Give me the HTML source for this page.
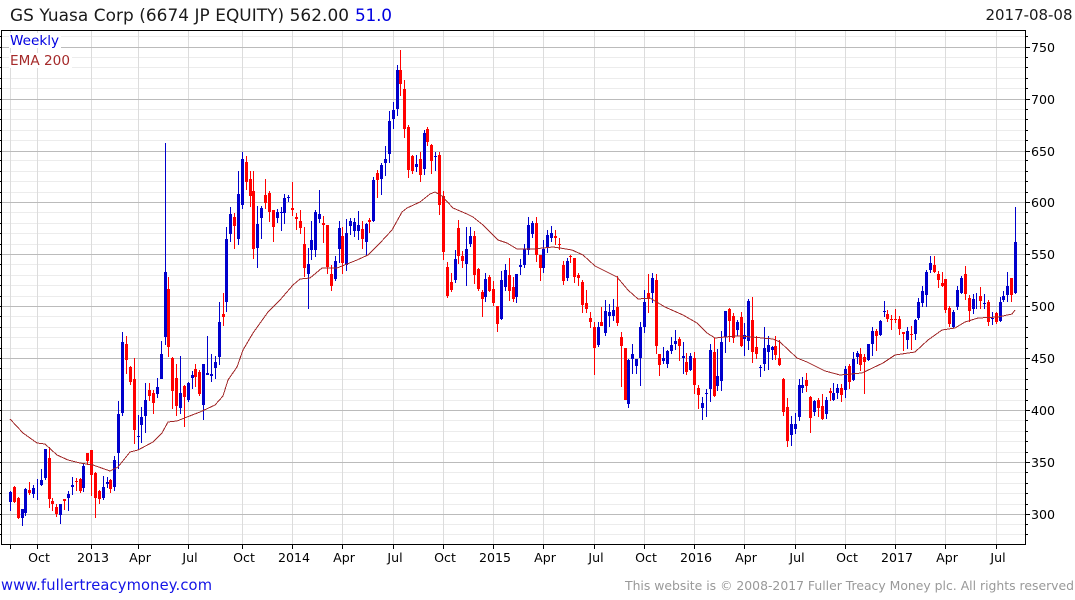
<!DOCTYPE html>
<html>
<head>
<meta charset="utf-8">
<title>GS Yuasa Corp</title>
<style>
html,body{margin:0;padding:0;background:#fff;width:1075px;height:600px;overflow:hidden}
svg{display:block}
text{font-family:"DejaVu Sans","Liberation Sans",sans-serif}
</style>
</head>
<body>
<svg width="1075" height="600" viewBox="0 0 1075 600" xmlns="http://www.w3.org/2000/svg">
<rect width="1075" height="600" fill="#fff"/>
<g shape-rendering="crispEdges" fill="none">
<path stroke="#ececec" d="M2 534.5H1025M2 524.5H1025M2 504.5H1025M2 493.5H1025M2 483.5H1025M2 472.5H1025M2 452.5H1025M2 441.5H1025M2 431.5H1025M2 420.5H1025M2 400.5H1025M2 389.5H1025M2 379.5H1025M2 368.5H1025M2 348.5H1025M2 337.5H1025M2 327.5H1025M2 316.5H1025M2 296.5H1025M2 285.5H1025M2 275.5H1025M2 264.5H1025M2 244.5H1025M2 233.5H1025M2 223.5H1025M2 212.5H1025M2 192.5H1025M2 181.5H1025M2 171.5H1025M2 160.5H1025M2 140.5H1025M2 130.5H1025M2 119.5H1025M2 109.5H1025M2 88.5H1025M2 78.5H1025M2 67.5H1025M2 57.5H1025M2 36.5H1025"/>
<path stroke="#dcdcdc" d="M10.5 30V544M37.5 30V544M91.5 30V544M138.5 30V544M188.5 30V544M242.5 30V544M292.5 30V544M342.5 30V544M393.5 30V544M443.5 30V544M493.5 30V544M543.5 30V544M594.5 30V544M644.5 30V544M694.5 30V544M744.5 30V544M795.5 30V544M845.5 30V544M895.5 30V544M945.5 30V544M996.5 30V544"/>
<path stroke="#bbb" d="M2 514.5H1025M2 462.5H1025M2 410.5H1025M2 358.5H1025M2 306.5H1025M2 254.5H1025M2 202.5H1025M2 151.5H1025M2 99.5H1025M2 47.5H1025"/>
<!-- blue wicks -->
<path stroke="#0000cc" d="M10.5 491V511M22.5 509V526M25.5 488V516M33.5 485V498M37.5 479V500M41.5 469V486M45.5 449V480M60.5 504V524M68.5 491V511M72.5 477V495M83.5 463V492M103.5 476V500M107.5 477V488M114.5 456V491M118.5 401V469M122.5 332V416M138.5 415V450M141.5 407V443M145.5 383V433M157.5 378V398M161.5 341V379M165.5 143V345M180.5 356V414M188.5 382V402M192.5 371V389M203.5 364V420M207.5 336V375M211.5 354V382M215.5 356V379M219.5 302V365M226.5 227V312M230.5 207V242M238.5 171V245M242.5 152V209M257.5 206V268M261.5 206V239M277.5 209V223M281.5 207V231M284.5 194V224M288.5 195V202M308.5 248V309M311.5 221V260M315.5 210V257M319.5 190V223M335.5 256V281M339.5 221V263M346.5 219V271M350.5 218V235M354.5 218V237M358.5 211V240M366.5 223V256M373.5 177V222M381.5 163V195M385.5 146V176M389.5 111V163M393.5 102V129M397.5 65V116M416.5 155V172M424.5 130V175M435.5 152V171M455.5 250V283M466.5 227V286M470.5 227V247M485.5 273V302M501.5 271V320M505.5 264V291M516.5 274V303M520.5 259V275M524.5 244V268M528.5 217V255M532.5 221V238M543.5 240V273M547.5 230V253M551.5 226V242M567.5 258V281M598.5 322V347M605.5 300V336M609.5 304V327M613.5 299V321M628.5 359V408M632.5 344V374M636.5 359V374M640.5 322V386M644.5 290V333M652.5 273V303M663.5 347V364M667.5 350V368M671.5 337V354M675.5 330V350M683.5 342V374M690.5 353V371M702.5 397V420M706.5 389V417M710.5 344V402M717.5 349V391M721.5 331V391M725.5 311V353M737.5 320V336M744.5 323V356M748.5 299V350M760.5 365V377M764.5 327V371M768.5 336V370M772.5 346V360M791.5 416V446M795.5 413V434M799.5 379V421M802.5 377V393M814.5 400V416M826.5 397V419M833.5 383V401M837.5 384V399M845.5 366V398M853.5 352V381M857.5 351V364M868.5 344V361M872.5 327V356M880.5 320V336M884.5 301V317M907.5 327V349M915.5 319V340M918.5 298V320M922.5 286V307M926.5 270V307M930.5 256V273M953.5 310V328M957.5 286V310M961.5 276V294M973.5 294V314M976.5 293V309M984.5 294V309M992.5 312V325M1000.5 297V322M1003.5 291V302M1007.5 272V302M1015.5 207V294"/>
<!-- red wicks -->
<path stroke="#ff0000" d="M14.5 486V503M18.5 497V519M29.5 482V495M49.5 447V508M52.5 498V511M56.5 504V517M64.5 499V510M76.5 478V491M80.5 478V493M87.5 453V465M91.5 450V496M95.5 472V518M99.5 490V504M110.5 479V493M126.5 336V374M130.5 366V385M134.5 358V444M149.5 383V401M153.5 390V414M168.5 277V357M172.5 357V409M176.5 364V416M184.5 385V427M195.5 364V387M199.5 370V396M223.5 293V326M234.5 213V249M246.5 156V190M250.5 171V207M253.5 171V259M265.5 179V209M269.5 191V222M273.5 210V242M292.5 182V216M296.5 213V230M300.5 210V234M304.5 227V277M323.5 216V243M327.5 225V274M331.5 265V291M342.5 227V274M362.5 221V249M369.5 218V233M377.5 170V198M400.5 50V96M404.5 80V138M408.5 125V178M412.5 155V174M420.5 152V182M427.5 127V146M431.5 144V174M439.5 152V215M443.5 191V260M447.5 262V298M451.5 273V292M458.5 220V264M462.5 251V268M474.5 231V284M478.5 268V291M482.5 290V317M489.5 275V292M493.5 281V306M497.5 306V332M509.5 258V301M513.5 277V302M536.5 217V262M540.5 255V281M555.5 230V245M559.5 238V250M563.5 261V285M570.5 255V263M574.5 258V283M578.5 273V286M582.5 280V313M586.5 290V313M590.5 312V328M594.5 322V375M601.5 307V326M617.5 276V326M621.5 332V387M625.5 348V400M648.5 274V313M656.5 274V354M659.5 354V376M679.5 337V361M686.5 353V375M694.5 352V394M698.5 385V409M714.5 338V397M729.5 308V342M733.5 313V343M741.5 312V347M752.5 297V363M756.5 336V359M775.5 336V360M779.5 340V366M783.5 378V416M787.5 398V447M806.5 373V392M810.5 396V433M818.5 398V417M822.5 394V420M830.5 388V401M841.5 384V402M849.5 364V389M860.5 348V371M864.5 354V394M876.5 329V351M887.5 310V322M891.5 315V330M895.5 309V323M899.5 316V335M903.5 332V351M911.5 326V350M934.5 256V273M938.5 271V288M942.5 272V287M945.5 279V313M949.5 306V327M965.5 266V300M969.5 295V322M980.5 287V309M988.5 300V326M996.5 312V324M1011.5 278V302"/>
<!-- blue bodies -->
<path stroke="#0000cc" stroke-width="3" d="M10.5 492V502M22.5 509V518M25.5 489V513M33.5 488V494M41.5 480V485M45.5 449V478M60.5 504V515M68.5 494V498M72.5 485V487M83.5 466V488M103.5 487V498M107.5 482V484M114.5 460V487M118.5 414V453M122.5 342V413M138.5 436V437M141.5 417V425M145.5 400V416M157.5 387V394M161.5 354V379M165.5 272V337M180.5 393V408M188.5 383V400M192.5 375V378M203.5 364V405M207.5 373V375M211.5 374V376M215.5 362V368M219.5 322V357M226.5 239V302M230.5 214V234M238.5 194V239M242.5 159V205M257.5 224V248M261.5 208V218M277.5 212V218M281.5 212V213M284.5 198V213M288.5 197V198M308.5 264V274M311.5 240V250M315.5 212V250M319.5 214V219M335.5 261V279M339.5 228V249M346.5 233V265M350.5 221V226M354.5 222V231M358.5 225V231M366.5 224V242M373.5 180V221M381.5 165V179M385.5 159V163M389.5 121V154M393.5 110V119M397.5 70V109M416.5 164V167M424.5 133V169M435.5 156V157M455.5 259V280M466.5 249V264M470.5 236V244M485.5 279V297M501.5 280V319M505.5 270V287M516.5 274V297M520.5 265V267M524.5 249V265M528.5 225V250M532.5 223V234M543.5 249V268M547.5 235V248M551.5 233V238M567.5 261V278M598.5 327V345M605.5 311V333M609.5 312V316M613.5 310V316M628.5 360V404M632.5 354V359M636.5 359V366M640.5 327V358M644.5 302V327M652.5 278V293M663.5 358V361M667.5 351V364M671.5 345V351M675.5 341V344M683.5 356V358M690.5 356V370M702.5 403V408M706.5 393V394M710.5 350V389M717.5 376V386M721.5 342V381M725.5 311V337M737.5 322V330M744.5 335V339M748.5 301V341M760.5 367V368M764.5 348V364M768.5 345V352M772.5 347V350M791.5 424V435M795.5 424V429M799.5 385V417M802.5 385V388M814.5 401V412M826.5 400V414M833.5 393V400M837.5 388V393M845.5 369V390M853.5 359V380M857.5 353V357M868.5 344V360M872.5 331V344M880.5 321V335M884.5 311V312M907.5 331V340M915.5 320V334M918.5 302V318M922.5 291V303M926.5 272V295M930.5 263V270M953.5 312V327M957.5 290V307M961.5 278V293M973.5 299V309M984.5 303V304M992.5 318V319M1000.5 302V321M1003.5 296V300M1007.5 286V295M1015.5 242V293"/>
<!-- red bodies -->
<path stroke="#ff0000" stroke-width="3" d="M14.5 487V502M18.5 498V518M29.5 490V493M49.5 458V499M52.5 501V504M56.5 507V514M64.5 499V501M76.5 481V482M80.5 479V491M87.5 453V461M91.5 450V475M95.5 473V498M99.5 491V499M110.5 480V489M126.5 344V360M130.5 367V382M134.5 379V430M149.5 390V396M153.5 393V403M168.5 289V347M172.5 358V391M176.5 378V406M184.5 386V397M195.5 369V377M199.5 372V394M223.5 314V317M234.5 217V226M246.5 162V182M250.5 179V196M253.5 191V249M265.5 195V203M269.5 193V212M273.5 210V227M292.5 208V210M296.5 217V219M300.5 221V228M304.5 244V268M323.5 223V225M327.5 225V267M331.5 274V286M342.5 236V263M362.5 229V239M369.5 220V222M377.5 173V180M400.5 70V84M404.5 89V129M408.5 127V170M412.5 156V171M420.5 159V175M427.5 129V142M431.5 145V161M439.5 155V205M443.5 196V252M447.5 267V296M451.5 282V290M458.5 228V256M462.5 256V261M474.5 236V275M478.5 269V289M482.5 292V299M489.5 277V291M493.5 289V303M497.5 306V324M509.5 275V291M513.5 287V299M536.5 223V255M540.5 255V268M555.5 236V238M559.5 244V245M563.5 265V281M570.5 256V257M574.5 258V277M578.5 275V278M582.5 282V305M586.5 303V309M590.5 318V322M594.5 327V348M601.5 322V326M617.5 307V323M621.5 337V346M625.5 348V400M648.5 293V299M656.5 280V346M659.5 354V365M679.5 339V346M686.5 362V372M694.5 358V385M698.5 388V395M714.5 352V396M729.5 309V321M733.5 316V338M741.5 317V346M752.5 320V352M756.5 347V354M775.5 346V355M779.5 358V365M783.5 379V412M787.5 407V441M806.5 380V386M810.5 397V418M818.5 400V408M822.5 406V419M830.5 391V393M841.5 388V395M849.5 366V382M860.5 354V365M864.5 357V362M876.5 331V336M887.5 314V319M891.5 319V320M895.5 319V320M899.5 319V329M903.5 332V334M911.5 334V335M934.5 265V272M938.5 274V280M942.5 283V286M945.5 279V310M949.5 308V324M965.5 274V294M969.5 298V311M980.5 296V301M988.5 302V322M996.5 313V322M1011.5 278V295"/>
<!-- EMA -->
<polyline stroke="#a02828" points="10,419 23,433 37,443 45,444 57,455 68,460 80,463 93,465 110,471 118,467 130,452 138,450 153,442 162,433 168,422 177,421 187,417 200,412 215,405 223,396 228,380 237,367 243,350 253,333 268,312 280,300 293,285 300,279 310,278 322,268 337,268 357,260 368,255 380,243 392,230 402,212 407,208 420,202 430,194 435,192 442,196 453,208 467,214 473,217 483,225 498,240 507,243 517,249 533,249 553,247 560,248 572,250 583,255 595,266 617,277 628,290 638,299 650,298 665,307 683,315 697,323 707,333 715,338 725,337 738,336 752,337 773,339 780,342 797,358 807,362 825,371 840,375 862,373 883,363 895,355 915,352 928,340 942,330 955,328 965,322 978,318 998,317 1012,314 1015,310"/>
<!-- frame + ticks -->
<path stroke="#000" d="M1.5 30V544.5M1 30.5H1025.5M1 544.5H1025.5M1025.5 30V545"/>
<path stroke="#000" d="M1026 514.5H1030M1026 462.5H1030M1026 410.5H1030M1026 358.5H1030M1026 306.5H1030M1026 254.5H1030M1026 202.5H1030M1026 151.5H1030M1026 99.5H1030M1026 47.5H1030M1026 534.5H1028M1026 524.5H1028M1026 504.5H1028M1026 493.5H1028M1026 483.5H1028M1026 472.5H1028M1026 452.5H1028M1026 441.5H1028M1026 431.5H1028M1026 420.5H1028M1026 400.5H1028M1026 389.5H1028M1026 379.5H1028M1026 368.5H1028M1026 348.5H1028M1026 337.5H1028M1026 327.5H1028M1026 316.5H1028M1026 296.5H1028M1026 285.5H1028M1026 275.5H1028M1026 264.5H1028M1026 244.5H1028M1026 233.5H1028M1026 223.5H1028M1026 212.5H1028M1026 192.5H1028M1026 181.5H1028M1026 171.5H1028M1026 160.5H1028M1026 140.5H1028M1026 130.5H1028M1026 119.5H1028M1026 109.5H1028M1026 88.5H1028M1026 78.5H1028M1026 67.5H1028M1026 57.5H1028M1026 36.5H1028"/>
<path stroke="#000" d="M0 514.5H1M0 462.5H1M0 410.5H1M0 358.5H1M0 306.5H1M0 254.5H1M0 202.5H1M0 151.5H1M0 99.5H1M0 47.5H1M0 534.5H1M0 524.5H1M0 504.5H1M0 493.5H1M0 483.5H1M0 472.5H1M0 452.5H1M0 441.5H1M0 431.5H1M0 420.5H1M0 400.5H1M0 389.5H1M0 379.5H1M0 368.5H1M0 348.5H1M0 337.5H1M0 327.5H1M0 316.5H1M0 296.5H1M0 285.5H1M0 275.5H1M0 264.5H1M0 244.5H1M0 233.5H1M0 223.5H1M0 212.5H1M0 192.5H1M0 181.5H1M0 171.5H1M0 160.5H1M0 140.5H1M0 130.5H1M0 119.5H1M0 109.5H1M0 88.5H1M0 78.5H1M0 67.5H1M0 57.5H1M0 36.5H1"/>
<path stroke="#000" d="M10.5 545V549M37.5 545V549M91.5 545V549M138.5 545V549M188.5 545V549M242.5 545V549M292.5 545V549M342.5 545V549M393.5 545V549M443.5 545V549M493.5 545V549M543.5 545V549M594.5 545V549M644.5 545V549M694.5 545V549M744.5 545V549M795.5 545V549M845.5 545V549M895.5 545V549M945.5 545V549M996.5 545V549"/>
</g>
<!-- legend -->
<rect x="9" y="33" width="52" height="15" fill="#fff"/>
<rect x="9" y="53" width="63" height="15" fill="#fff"/>
<text x="10" y="45" font-size="13.6" fill="#0000e0" textLength="49">Weekly</text>
<text x="10" y="65" font-size="13.6" fill="#a52a2a" textLength="60">EMA 200</text>
<!-- title -->
<text x="10" y="21" font-size="16.9" fill="#1a1a1a" textLength="339">GS Yuasa Corp (6674 JP EQUITY) 562.00</text>
<text x="355" y="21" font-size="16.9" fill="#0000e0" textLength="37">51.0</text>
<text x="985.5" y="20" font-size="15" fill="#1a1a1a" textLength="87">2017-08-08</text>
<!-- y labels -->
<g font-size="12.6" fill="#000">
<text x="1031" y="52">750</text>
<text x="1031" y="104">700</text>
<text x="1031" y="156">650</text>
<text x="1031" y="207">600</text>
<text x="1031" y="259">550</text>
<text x="1031" y="311">500</text>
<text x="1031" y="363">450</text>
<text x="1031" y="415">400</text>
<text x="1031" y="467">350</text>
<text x="1031" y="519">300</text>
</g>
<!-- x labels -->
<g font-size="12.6" fill="#000" text-anchor="middle">
<text x="39" y="562">Oct</text>
<text x="93" y="562">2013</text>
<text x="140" y="562">Apr</text>
<text x="190" y="562">Jul</text>
<text x="244" y="562">Oct</text>
<text x="294" y="562">2014</text>
<text x="344" y="562">Apr</text>
<text x="395" y="562">Jul</text>
<text x="445" y="562">Oct</text>
<text x="495" y="562">2015</text>
<text x="545" y="562">Apr</text>
<text x="596" y="562">Jul</text>
<text x="646" y="562">Oct</text>
<text x="696" y="562">2016</text>
<text x="746" y="562">Apr</text>
<text x="797" y="562">Jul</text>
<text x="847" y="562">Oct</text>
<text x="897" y="562">2017</text>
<text x="947" y="562">Apr</text>
<text x="998" y="562">Jul</text>
</g>
<!-- footer -->
<text x="1" y="590" font-size="14.7" fill="#1414e6" textLength="211">www.fullertreacymoney.com</text>
<text x="625" y="590" font-size="12.4" fill="#999" textLength="449">This website is © 2008-2017 Fuller Treacy Money plc. All rights reserved</text>
</svg>
</body>
</html>
